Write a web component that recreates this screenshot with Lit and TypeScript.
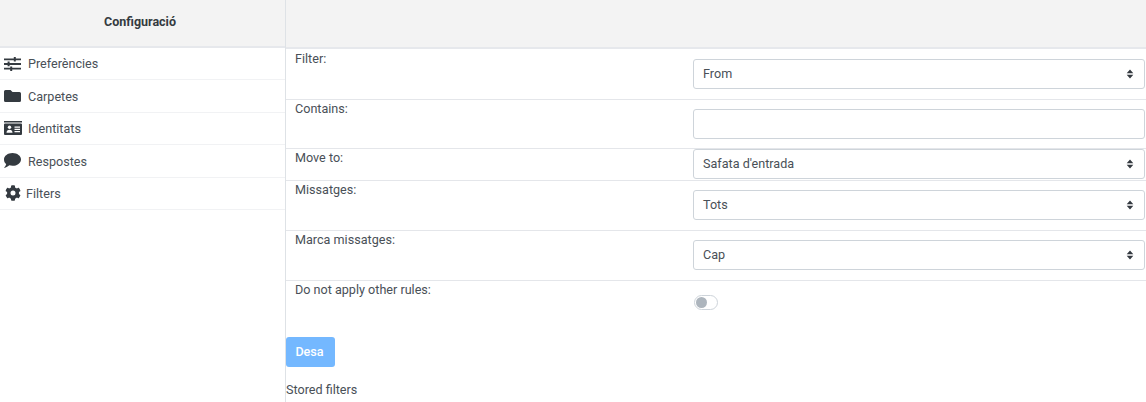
import { LitElement, html, css, svg } from "lit";
import { customElement } from "lit/decorators.js";

const icons = {
  sliders: svg`<svg class="ic" style="width:17px;height:14px" viewBox="0 0 17 14"><path fill="#343a40" d="M0 1.500h17v1.800H0zM0 6.100h17v1.800H0zM0 10.700h17v1.800H0z"/><path fill="#343a40" d="M9.800 0h2v4.600h-2zM3.600 4.600h2v4.600h-2zM6.200 9.400h2V14h-2z"/></svg>`,
  folder: svg`<svg class="ic" style="width:17px;height:12px" viewBox="0 0 17 12"><path fill="#343a40" d="M1.500 0h5l2 2h7A1.500 1.500 0 0 1 17 3.500v7a1.500 1.500 0 0 1-1.500 1.500h-14A1.500 1.500 0 0 1 0 10.500v-9A1.500 1.500 0 0 1 1.500 0z"/></svg>`,
  card: svg`<svg class="ic" style="width:18px;height:14px" viewBox="0 0 18 14"><path fill="#343a40" d="M0 0h18v1.500H0zM1 2.500h16A1 1 0 0 1 18 3.500V13a1 1 0 0 1-1 1H1a1 1 0 0 1-1-1V3.500a1 1 0 0 1 1-1z"/><circle cx="5.500" cy="6.300" r="1.700" fill="#fff"/><path fill="#fff" d="M2.500 11.800c0-2 1.200-3 3-3s3 1 3 3zM10.500 5.500h5.500v1.200h-5.500zM10.500 7.800h5.500V9h-5.500zM10.500 10.100h5.500v1.200h-5.500z"/></svg>`,
  comment: svg`<svg class="ic" style="width:17px;height:15px" viewBox="0 0 17 15"><path fill="#343a40" d="M8.500 0C13.200 0 17 2.900 17 6.400s-3.800 6.400-8.500 6.400c-1.100 0-2.200-.2-3.200-.5C4.200 13.300 2.400 14.500 0 15c.9-1 1.900-2.400 2.200-3.900C.8 10 0 8.300 0 6.400 0 2.900 3.800 0 8.500 0z"/></svg>`,
  cog: svg`<svg class="ic" style="width:16px;height:16px" viewBox="0 0 512 512"><path fill="#343a40" d="M487 316l-42-25c4-23 4-47 0-70l42-25c5-3 7-9 6-14-11-35-30-67-55-93-4-4-10-5-15-2l-42 24c-18-15-38-27-61-35V28c0-6-4-11-9-12-36-8-73-8-108 0-6 1-10 6-10 12v48c-22 8-43 20-60 35L91 87c-5-3-11-2-15 2-25 26-44 58-55 93-2 5 1 11 6 14l42 25c-4 23-4 47 0 70l-42 25c-5 3-8 9-6 14 11 35 30 67 55 93 4 4 10 5 15 2l42-24c18 15 38 27 60 35v48c0 6 4 11 10 12 36 8 73 8 108 0 5-1 9-6 9-12v-48c23-8 43-20 61-35l42 24c5 3 11 2 15-2 25-26 44-58 55-93 1-5-1-11-6-14zM256 336a80 80 0 1 1 0-160 80 80 0 0 1 0 160z"/></svg>`,
};
const arrows = svg`<svg class="arrows" viewBox="0 0 8 10"><path fill="#343a40" d="M4 0.500l3.300 3.700H.7zM4 9.500L.7 5.800h6.600z"/></svg>`;

@customElement("app-root")
export class AppRoot extends LitElement {
  static styles = css`
    :host { display: block; height: 402px; overflow: hidden; font-family: Roboto, sans-serif; font-size: 12.6px; color: #495057; background: #fff; }
    .page { display: flex; height: 402px; }
    .side { width: 285px; flex: none; border-right: 1px solid #dee2e6; }
    .head { height: 47px; background: #f3f3f3; border-bottom: 2px solid #e6e8ec; display: flex; align-items: center; justify-content: center; font-weight: 700; font-size: 12.5px; color: #343a40; }
    .side .head { padding-right: 5px; padding-bottom: 3px; height: 43px; }
    .item { height: 31.4px; border-bottom: 1px solid #f1f2f4; display: flex; align-items: center; gap: 7px; padding-left: 4px; line-height: 1; }
    .item span { margin-top: 2px; }
    .item.card { gap: 6px; }
    .item.cog { gap: 5px; padding-left: 5px; }
    .ic { display: block; flex: none; }
    .main { flex: 1; min-width: 0; }
    .row { display: flex; border-bottom: 1px solid #e4e6ea; padding: 9px 1px 10px 0; }
    .row.first { padding-top: 10px; }
    .row.second { padding-bottom: 9px; }
    .row.tight { padding: 0 1px 1px 0; }
    .label { flex: none; width: 398px; padding-left: 9px; margin-top: -8px; line-height: 16px; }
    .tight .label { margin-top: 1px; }
    .field { flex: 1; height: 30px; box-sizing: border-box; border: 1px solid #ced4da; border-radius: 3px; display: flex; align-items: center; justify-content: space-between; padding: 0 10px 0 9px; background: #fff; color: #495057; }
    .field span { margin-bottom: 2px; }
    .arrows { width: 8px; height: 10px; }
    .row.last { border: none; padding: 0; height: 56px; }
    .row.last .label { margin-top: 1px; }
    .toggle { width: 24px; height: 15px; box-sizing: border-box; border: 1px solid #ced4da; border-radius: 8px; margin-top: 14px; margin-left: 1px; padding: 1px; }
    .knob { width: 11px; height: 11px; border-radius: 50%; background: #adb5bd; }
    .btn { width: 49px; height: 30px; box-sizing: border-box; padding: 0 2px 2px 0; background: #74b8ff; color: #fff; border-radius: 3px; font-weight: 500; display: flex; align-items: center; justify-content: center; }
    .stored { margin-top: 15px; line-height: 16px; }
  `;
  render() {
    const nav: [unknown, string, string][] = [[icons.sliders, "Preferències", ""], [icons.folder, "Carpetes", ""], [icons.card, "Identitats", "card"], [icons.comment, "Respostes", ""]];
    const sel = (t: string) => html`<div class="field"><span>${t}</span>${arrows}</div>`;
    return html`<div class="page">
      <aside class="side">
        <div class="head">Configuració</div>
        ${nav.map(([i, t, c]) => html`<div class="item ${c}">${i}<span>${t}</span></div>`)}
        <div class="item cog">${icons.cog}<span>Filters</span></div>
      </aside>
      <main class="main">
        <div class="head"></div>
        <div class="row first"><div class="label">Filter:</div>${sel("From")}</div>
        <div class="row second"><div class="label">Contains:</div><div class="field"></div></div>
        <div class="row tight"><div class="label">Move to:</div>${sel("Safata d'entrada")}</div>
        <div class="row"><div class="label">Missatges:</div>${sel("Tots")}</div>
        <div class="row"><div class="label">Marca missatges:</div>${sel("Cap")}</div>
        <div class="row last"><div class="label">Do not apply other rules:</div><div class="toggle"><div class="knob"></div></div></div>
        <div class="btn">Desa</div>
        <div class="stored">Stored filters</div>
      </main>
    </div>`;
  }
}
